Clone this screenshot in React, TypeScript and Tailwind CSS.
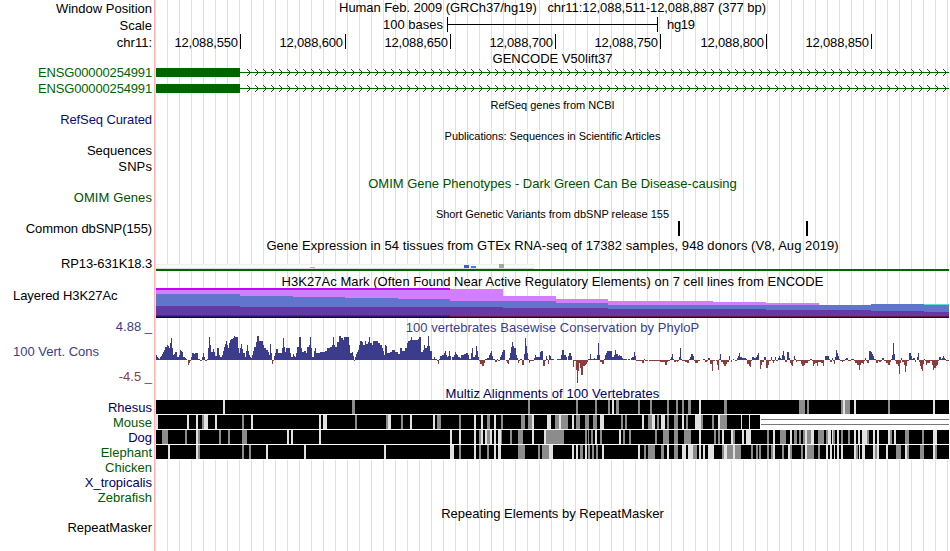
import type { ReactNode } from "react";

const BLOCKS = [150, 350, 550, 750];

// "column:score" pairs, one string per 200px block, columns are in thirds of a pixel
const PHYLOP = [
  "18:5 21:3 24:2 27:1 30:3 33:4 36:6 39:8 42:10 45:13 51:15 54:14 57:12 60:17 63:22 66:12 69:5 72:6 75:8 81:3 87:5 90:10 93:9 96:8 99:3 105:2 108:1 111:0 114:-5 117:-3 120:-1 123:3 126:7 132:6 135:7 144:1 150:-1 156:3 159:7 162:3 165:-1 171:1 174:12 177:23 180:15 183:8 189:11 192:8 195:4 201:12 207:5 210:3 216:5 219:9 222:13 225:16 228:19 231:15 234:12 237:17 240:20 243:21 249:22 252:24 255:23 264:12 267:7 270:12 273:16 276:11 279:7 285:3 288:9 291:15 294:9 297:5 300:3 303:2 306:5 309:9 312:13 318:18 321:24 327:19 339:15 342:12 348:10 354:8 357:5 360:16 363:7 366:-4 369:-1 372:4 375:7 378:11 384:7 396:12 399:22 402:13 405:8 408:12 420:7 423:3 429:6 432:4 435:3 438:7 441:13 447:23 453:12 456:8 462:9 468:7 471:13 477:15 480:23 483:12 486:3 492:9 495:12 498:7 510:8 525:9 531:12 540:13 546:15 549:23 552:15 555:13 561:18 567:24 573:22 579:20 582:23 597:15",
  "0:7 6:8 9:4 12:-1 15:3 18:6 21:8 24:10 27:15 30:19 36:18 39:15 45:19 48:16 54:18 57:23 60:17 66:15 69:19 84:17 90:15 96:12 99:9 102:5 105:15 108:14 111:7 120:8 126:10 135:8 144:6 150:12 156:9 165:12 171:17 174:19 180:20 183:23 186:20 204:21 207:23 213:8 219:10 222:15 225:12 231:14 234:24 237:14 240:9 246:1 252:3 255:1 261:-1 264:-4 267:1 270:4 276:5 282:7 285:9 288:5 291:3 294:4 297:9 300:4 303:0 306:3 312:5 315:8 318:6 321:5 324:3 330:2 333:5 342:6 348:7 354:5 357:1 363:7 366:12 369:3 375:5 378:14 381:9 384:3 387:-1 390:-4 396:-6 402:-3 405:1 411:2 417:5 420:7 423:9 426:4 429:1 435:-2 441:1 444:-1 450:3 453:5 456:8 459:10 465:0 468:-1 471:-3 474:-4 477:2 480:7 483:13 486:18 489:14 492:12 498:5 501:2 504:-3 507:-1 510:1 516:-5 522:6 525:22 528:14 531:7 534:1 537:-3 540:-1 552:2 555:5 558:3 570:8 573:9 579:-6 585:-1 588:4 591:1 594:-4 597:5",
  "0:4 3:1 12:0 21:1 33:5 36:10 42:5 48:3 51:0 54:4 57:7 63:4 66:0 69:-7 72:-1 78:-10 81:-23 84:-11 87:-3 90:-8 93:-15 99:-6 105:-5 108:-4 111:-2 114:1 120:6 123:1 132:2 135:1 141:5 144:17 147:5 150:-2 156:-4 162:1 165:5 168:7 171:9 186:3 192:5 195:10 198:6 204:4 207:5 210:4 216:2 219:1 231:0 234:1 240:0 243:2 246:3 252:8 255:4 258:-1 276:-3 282:1 285:-1 294:0 297:-1 330:-2 345:-5 351:-2 354:-1 360:1 363:3 366:6 369:1 372:-2 378:-1 381:-2 384:-1 387:3 390:12 393:1 396:-1 405:-2 411:-3 417:1 420:3 423:6 429:4 432:-1 435:-3 444:-1 450:0 459:1 465:-2 471:-1 474:2 480:-4 486:-11 489:-1 495:0 498:-1 501:-5 504:-10 507:1 510:6 513:-2 519:-4 522:-6 528:-4 531:-2 537:4 540:0 543:-2 546:0 549:1 552:0 555:-1 561:2 564:4 567:7 570:3 576:2 588:1 591:-4 597:-6",
  "0:-7 3:-1 6:3 12:2 18:3 21:5 24:7 27:0 30:-9 33:-5 36:-2 42:3 48:-8 54:-5 57:-1 63:3 66:-1 69:-3 72:-1 75:3 78:-1 84:2 87:4 90:2 93:1 96:5 99:9 102:4 105:-2 111:8 117:2 120:-3 123:-5 126:-6 129:-1 132:4 135:1 138:-2 141:-1 153:-4 156:-6 162:-5 165:-3 174:-1 180:1 186:-1 189:-6 192:-4 195:-3 201:-6 204:-2 213:-3 219:-6 222:0 225:4 237:1 240:-2 246:2 249:-1 252:-4 255:3 258:10 261:7 264:4 267:1 270:-1 276:-2 279:-1 285:1 288:2 294:-1 303:1 312:-1 315:-3 321:-5 327:-10 330:-5 333:-3 339:-4 342:-1 345:2 348:-1 351:-3 357:9 363:8 366:6 369:4 372:1 378:-3 384:-1 387:-2 393:-1 396:2 402:-1 408:-3 414:-5 420:-2 423:1 426:5 429:17 432:6 435:-1 438:-4 444:-6 447:-14 450:-3 453:2 456:-2 462:-5 465:-12 468:-6 471:-1 477:7 483:4 486:1 489:2 495:-2 498:0 501:3 504:7 507:-2 510:-6 513:-9 516:-11 519:-4 522:1 525:-1 528:-5 531:-3 540:-1 546:-5 549:-10 552:-8 558:-6 561:-5 564:-1 567:3 573:1 576:2 579:4 582:2 585:1 588:-1 597:0",
];

// mismatching bases: column, L(ight) or G(ray), width
const RHESUS = [
  "219L6",
  "6G9 534G6",
  "78G6 135G6 174G6 186L6 198G9 264G6 300G6 351G6 378G6 396G6 414G9 447L6 522G9",
  "147G18 171G6 273G6 279L6 285G15 312L6 414G6 549L6",
];
const MOUSE = [
  "18L6 111L6 138L6 156G6 162L12 195L6 276G6 303L6 507L6 519L12",
  "15G6 108G6 114L9 153G6 180L6 249L6 261G12 327G6 372L6 393L6 411G9 432L6 453G6 513G12 534G12 546L6 591L12",
  "15G12 27L6 33G21 66L6 78G12 105G12 129G12 150L12 213G6 225G6 276L6 294G12 306L9 321G6 333L12 351G6 372G12 396L6 408G6 435L18 453G6 486G6 504L6 510G6 516G15 573L3 597L3",
  "",
];
const DOG = [
  "36G18 105G6 138L6 144G6 207G6 234G6 276G15 411L6 423L6 507L6",
  "300L6 327L6 372L6 387G6 393L6 405L6 411G9 420L6 432L6 444L9 453G3 480G6 504G15 546L6 582L6 588G12",
  "0G42 105G6 114G3 123G6 135L6 150G6 207L6 219G6 237G6 315G6 339G18 372G12 402G21 447L6 492G6 504G6 516L6 543L6 549G6 576L6 588L12",
  "0L3 51G6 69L6 90G18 120L6 132G9 147G6 159G6 165L6 171G12 183L9 204G18 228G6 234L9 246L3 249G6 261L6 273G6 294G6 312L6 324L6 336L15 351G6 369L6 381L6 414L6 420G6 432L6 465G12 516G6 549L12",
];
const ELEPHANT = [
  "54L6 138L6 144G6 276G6 297G6 348L6 462L6",
  "102L6 300L12 327G6 372L6 387G6 411G6 432L6 444L9 504G21 564G6 576G21 597L3",
  "0L9 66L6 78L6 90G9 105L6 114G6 126G6 138G6 156L6 264L6 282G6 294G21 333G9 351L6 372G12 396L12 414L15 429G12 447L6 459L6 474L18 516G6 522L9 531G18 549L6 555G18",
  "3G6 18G6 27G6 51G6 63G6 69L6 96G6 114L6 120G6 153G6 165L6 171G21 204G6 228L6 240L6 252L3 261L6 273L6 312L6 318G6 327L3 336L9 369L6 375G6 381L6 408L6 438G15 465L6 471G6 510G12 549L6 555G6",
];

// x, top of the layer from there on
const MAGENTA = [[156, 288], [450, 289], [503, 296], [556, 299], [608, 301], [713, 302], [766, 303], [819, 306]];
const BLUE = [[156, 294], [240, 296], [293, 297], [345, 298], [398, 299], [450, 301], [556, 303], [608, 305], [871, 304], [924, 305]];
const PURPLE = [[156, 306], [240, 307], [503, 308], [608, 309], [766, 310], [871, 311], [924, 312]];

const RULER: [number, string][] = [
  [240, "12,088,550"],
  [345, "12,088,600"],
  [450, "12,088,650"],
  [555, "12,088,700"],
  [660, "12,088,750"],
  [766, "12,088,800"],
  [871, "12,088,850"],
];

const area = (steps: number[][]) => {
  let d = `M156 317`;
  steps.forEach(([x, y], i) => {
    const next = i + 1 < steps.length ? steps[i + 1][0] : 949;
    d += `L${x} ${y}H${next}`;
  });
  return d + "V317Z";
};

const wiggle = (sign: number) => {
  let d = "";
  PHYLOP.forEach((block, b) => {
    const pairs = block.split(" ").map((p) => p.split(":").map(Number));
    pairs.forEach(([col, score], i) => {
      const x = BLOCKS[b] + Math.round(col / 3);
      const end = i + 1 < pairs.length ? BLOCKS[b] + Math.round(pairs[i + 1][0] / 3) : BLOCKS[b] + (b === 3 ? 199 : 200);
      if (score * sign > 0) d += `M${x} 360V${360 - score}H${end}V360Z`;
    });
  });
  return d;
};

const Plot = ({ top, height, children }: { top: number; height: number; children: ReactNode }) => (
  <svg className="block shrink-0" width={794} height={height} viewBox={`156 ${top} 794 ${height}`} shapeRendering="crispEdges">
    {children}
  </svg>
);

const Row = ({ h, label, color = "text-black", left = "", children }: { h: string; label?: string; color?: string; left?: string; children?: ReactNode }) => (
  <div className={`flex ${h}`}>
    <div className={`w-[156px] shrink-0 pr-[4px] whitespace-pre leading-[15px] ${left || "text-right"} ${color}`}>{label}</div>
    {children}
  </div>
);

const Title = ({ cls = "", children }: { cls?: string; children: ReactNode }) => (
  <div className={`w-[793px] text-center whitespace-pre leading-[15px] ${cls}`}>{children}</div>
);

const CHEVRON = [0, 1, 2, 3, 2, 1, 0];

const Gene = ({ top }: { top: number }) => (
  <Plot top={top} height={16}>
    <g fill="#006400">
      <rect x={156} y={top + 3} width={84} height={9} />
      <rect x={240} y={top + 7} width={709} height={1} />
      {Array.from({ length: 88 }, (_, i) => (
        <path key={i} d={CHEVRON.map((dx, dy) => `M${247 + i * 8 + dx} ${top + 4 + dy}h1v1h-1z`).join("")} />
      ))}
    </g>
  </Plot>
);

const Alignment = ({ top, data, end = 949 }: { top: number; data: string[]; end?: number }) => (
  <Plot top={top} height={15}>
    <rect x={156} y={top} width={793} height={15} fill="#fff" />
    <rect x={156} y={top} width={end - 156} height={14} fill="#000" />
    {data.map((block, b) =>
      Array.from(block.matchAll(/(\d+)([LG])(\d+)/g), (m) => (
        <rect
          key={b + m[0]}
          x={BLOCKS[b] + Number(m[1]) / 3}
          y={top}
          width={Number(m[3]) / 3}
          height={14}
          fill={m[2] === "L" ? "#e1e1e1" : "#8c8c8c"}
        />
      ))
    )}
    {end < 949 && (
      <>
        <rect x={end + 1} y={top + 4} width={949 - end - 1} height={1} fill="#787878" />
        <rect x={end + 1} y={top + 9} width={949 - end - 1} height={1} fill="#787878" />
      </>
    )}
  </Plot>
);

export default function App() {
  return (
    <div className="w-[950px] h-[551px] overflow-hidden bg-white font-['Liberation_Sans',Arial,sans-serif] text-[13px] text-black">
      <div className="h-full bg-[linear-gradient(to_right,white_154px,#ffb4b4_154px,#ffb4b4_155px,transparent_155px),repeating-linear-gradient(to_right,transparent_0,transparent_11px,#dcdcff_11px,#dcdcff_12px)] bg-no-repeat">
        <Row h="h-[17px]" label="Window Position" left="text-right pt-px">
          <Title cls="tracking-[-0.06px]">Human Feb. 2009 (GRCh37/hg19)   chr11:12,088,511-12,088,887 (377 bp)</Title>
        </Row>
        <Row h="h-[17px]" label="Scale" left="text-right pt-px">
          <Plot top={17} height={17}>
            <text x={443} y={29} textAnchor="end">100 bases</text>
            <path d="M447.5 17V32M447 24.5H658M657.5 17V32" stroke="#000" />
            <text x={667} y={29} textLength={28}>hg19</text>
          </Plot>
        </Row>
        <Row h="h-[16px]" label="chr11:" left="text-right pt-px">
          <Plot top={34} height={16}>
            {RULER.map(([x, text]) => (
              <g key={x}>
                <text x={x - 2} y={47} textAnchor="end" textLength={63.5}>{text}</text>
                <rect x={x} y={34} width={1} height={15} />
              </g>
            ))}
          </Plot>
        </Row>
        <Row h="h-[15px]">
          <Title cls="pt-px">GENCODE V50lift37</Title>
        </Row>
        <Row h="h-[16px]" label="ENSG00000254991" color="text-[#006400]" left="text-right tracking-[-0.16px]">
          <Gene top={65} />
        </Row>
        <Row h="h-[16px]" label="ENSG00000254991" color="text-[#006400]" left="text-right tracking-[-0.16px]">
          <Gene top={81} />
        </Row>
        <Row h="h-[15px]">
          <Title cls="pt-px text-[11px]">RefSeq genes from NCBI</Title>
        </Row>
        <Row h="h-[16px]" label="RefSeq Curated" color="text-[#0c0c78]" left="text-right tracking-[-0.1px]" />
        <Row h="h-[15px]">
          <Title cls="pt-px text-[11px] tracking-[-0.04px]">Publications: Sequences in Scientific Articles</Title>
        </Row>
        <Row h="h-[16px]" label="Sequences" />
        <Row h="h-[17px]" label="SNPs" left="text-right tracking-[0.1px]" />
        <Row h="h-[14px]">
          <Title cls="text-[#005000]">OMIM Gene Phenotypes - Dark Green Can Be Disease-causing</Title>
        </Row>
        <Row h="h-[16px]" label="OMIM Genes" color="text-[#005000]" left="text-right tracking-[0.1px]" />
        <Row h="h-[15px]">
          <Title cls="pt-px text-[11px]">Short Genetic Variants from dbSNP release 155</Title>
        </Row>
        <Row h="h-[17px]" label="Common dbSNP(155)" left="text-right tracking-[-0.1px]">
          <Plot top={221} height={17}>
            <rect x={678} y={221} width={2} height={15} />
            <rect x={806} y={221} width={2} height={15} />
          </Plot>
        </Row>
        <Row h="h-[18px]">
          <Title cls="tracking-[0.055px]">Gene Expression in 54 tissues from GTEx RNA-seq of 17382 samples, 948 donors (V8, Aug 2019)</Title>
        </Row>
        <Row h="h-[18px]" label="RP13-631K18.3" left="text-right tracking-[-0.12px]">
          <Plot top={256} height={18}>
            <rect x={156} y={264} width={378} height={5} fill="#fafafa" />
            <rect x={156} y={264} width={378} height={1} fill="#f0f0f0" />
            <rect x={156} y={268} width={378} height={1} fill="#dcdcdc" />
            <rect x={310} y={267} width={5} height={1} fill="#9fb6b6" />
            <rect x={464} y={265} width={5} height={3} fill="#3a5fcd" />
            <rect x={471} y={266} width={5} height={2} fill="#1e90ff" />
            <rect x={499} y={264} width={5} height={4} fill="#a6a6a6" />
            <rect x={156} y={269} width={793} height={2} fill="#006400" />
          </Plot>
        </Row>
        <Row h="h-[14px]">
          <Title cls="tracking-[0.05px]">H3K27Ac Mark (Often Found Near Active Regulatory Elements) on 7 cell lines from ENCODE</Title>
        </Row>
        <Row h="h-[31px]" label="Layered H3K27Ac" left="pl-[13px] tracking-[-0.07px]">
          <Plot top={288} height={31}>
            <path d={area(MAGENTA)} fill="#d27fff" />
            <rect x={156} y={288} width={294} height={2} fill="#c800ff" />
            <path d={area(BLUE)} fill="#6075cc" />
            <rect x={924} y={304} width={25} height={1} fill="#60dcc8" />
            <path d={area(PURPLE)} fill="#6438a5" />
            <rect x={156} y={315} width={137} height={1} fill="#3c28a0" />
            <rect x={293} y={315} width={157} height={1} fill="#50286e" />
            <rect x={450} y={316} width={499} height={1} fill="#64144b" />
            <rect x={156} y={316} width={294} height={1} fill="#281960" />
            <rect x={156} y={317} width={793} height={1} fill="#140a28" />
          </Plot>
        </Row>
        <Row h="h-[15px]" label="4.88 _" color="text-[#3c3c8c]">
          <Title cls="pt-px tracking-[0.03px] text-[#3c3c8c]">100 vertebrates Basewise Conservation by PhyloP</Title>
        </Row>
        <div className="flex h-[52px]">
          <div className="flex w-[156px] shrink-0 flex-col gap-[10px] pt-[10px] pr-[4px] pl-[13px] leading-[15px]">
            <span className="text-[#3c3c8c]">100 Vert. Cons</span>
            <span className="text-right text-[#8c3c3c]">-4.5 _</span>
          </div>
          <Plot top={334} height={52}>
            <path d={wiggle(1)} fill="#3c3c8c" />
            <path d={wiggle(-1)} fill="#8c3c3c" />
          </Plot>
        </div>
        <Row h="h-[14px]">
          <Title cls="tracking-[0.08px] text-[#000064]">Multiz Alignments of 100 Vertebrates</Title>
        </Row>
        <Row h="h-[15px]" label="Rhesus" color="text-[#000064]">
          <Alignment top={400} data={RHESUS} />
        </Row>
        <Row h="h-[15px]" label="Mouse" color="text-[#005a00]">
          <Alignment top={415} data={MOUSE} end={760} />
        </Row>
        <Row h="h-[15px]" label="Dog" color="text-[#000064]">
          <Alignment top={430} data={DOG} />
        </Row>
        <Row h="h-[15px]" label="Elephant" color="text-[#005a00]">
          <Alignment top={445} data={ELEPHANT} />
        </Row>
        <Row h="h-[15px]" label="Chicken" color="text-[#005a00]" />
        <Row h="h-[15px]" label="X_tropicalis" color="text-[#000064]" />
        <Row h="h-[15px]" label="Zebrafish" color="text-[#005a00]" />
        <Row h="h-[15px]">
          <Title cls="pt-px">Repeating Elements by RepeatMasker</Title>
        </Row>
        <Row h="h-[15px]" label="RepeatMasker" />
      </div>
    </div>
  );
}
